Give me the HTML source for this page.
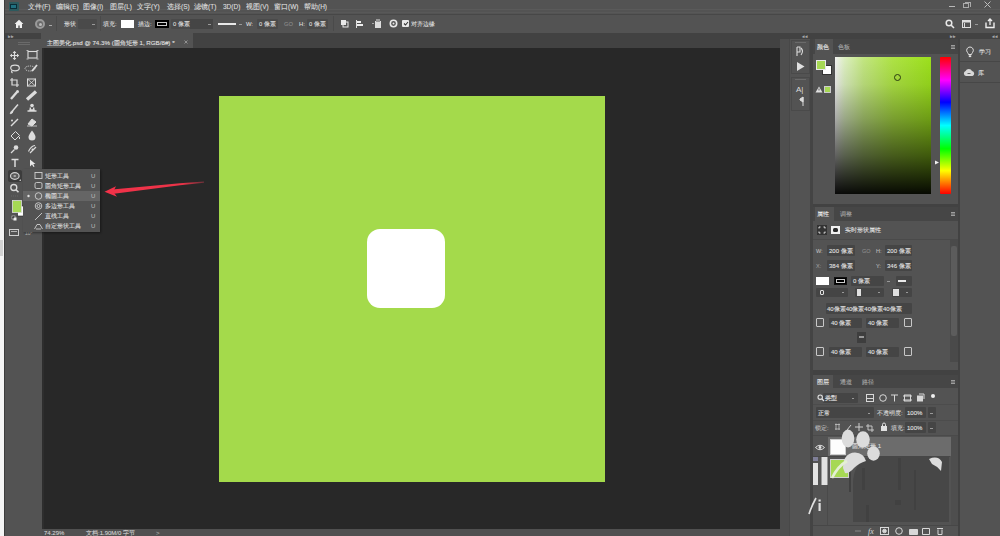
<!DOCTYPE html>
<html><head><meta charset="utf-8">
<style>
*{margin:0;padding:0;box-sizing:border-box}
html,body{width:1000px;height:536px;overflow:hidden;background:#535353;font-family:"Liberation Sans",sans-serif;color:#d6d6d6;font-size:7px;line-height:1}
.a{position:absolute}
.t{position:absolute;white-space:nowrap;font-size:7px;line-height:8px;color:#dedede;-webkit-text-stroke:0.1px currentColor}
.f{position:absolute;background:#454545;border-radius:1px}
.ic{position:absolute;overflow:visible}
</style></head><body>
<!-- left white strip -->
<div class="a" style="left:0;top:0;width:4px;height:536px;background:#f4f4f4"></div>
<div class="a" style="left:0;top:240px;width:2.5px;height:16px;background:#d2d2d2"></div>
<div class="a" style="left:4px;top:0;width:1px;height:536px;background:#3c3c3c"></div>

<!-- menu bar -->
<div class="a" style="left:5px;top:0;width:995px;height:12px;background:#535353"></div>
<div class="a" style="left:5px;top:12px;width:995px;height:1px;background:#585858"></div>
<!-- options bar -->
<div class="a" style="left:5px;top:14px;width:995px;height:19px;background:#535353"></div>
<!-- dark header strip / tab bar -->
<div class="a" style="left:5px;top:33px;width:995px;height:6px;background:#424242"></div>


<!-- MENU BAR CONTENT -->
<div class="a" style="left:5px;top:9px;width:995px;height:1px;background:#5a5a5a"></div>
<div class="a" style="left:5px;top:14px;width:995px;height:1px;background:#474747"></div>
<div class="a" style="left:8.5px;top:2px;width:10px;height:9px;background:#2c5a5e;border-radius:1px"></div>
<div class="a" style="left:10px;top:3.5px;width:7px;height:5.5px;background:#0c2c36"></div>
<div class="a" style="left:11px;top:5px;width:5px;height:2.5px;background:#1f7080"></div>
<div class="t" style="left:28px;top:3px;font-size:6.5px">文件(F)</div>
<div class="t" style="left:56px;top:3px;font-size:6.5px">编辑(E)</div>
<div class="t" style="left:83px;top:3px;font-size:6.5px">图像(I)</div>
<div class="t" style="left:110px;top:3px;font-size:6.5px">图层(L)</div>
<div class="t" style="left:137px;top:3px;font-size:6.5px">文字(Y)</div>
<div class="t" style="left:167px;top:3px;font-size:6.5px">选择(S)</div>
<div class="t" style="left:194px;top:3px;font-size:6.5px">滤镜(T)</div>
<div class="t" style="left:223px;top:3px;font-size:6.5px">3D(D)</div>
<div class="t" style="left:246px;top:3px;font-size:6.5px">视图(V)</div>
<div class="t" style="left:274px;top:3px;font-size:6.5px">窗口(W)</div>
<div class="t" style="left:304px;top:3px;font-size:6.5px">帮助(H)</div>
<div class="a" style="left:949px;top:6px;width:6px;height:1px;background:#b8b8b8"></div>
<div class="a" style="left:963px;top:3px;width:6px;height:5px;border:1px solid #aaa"></div>
<div class="a" style="left:965px;top:1.5px;width:6px;height:5px;border-top:1px solid #aaa;border-right:1px solid #aaa"></div>
<svg class="ic" style="left:983px;top:1px" width="9" height="7" viewBox="0 0 9 7"><path d="M1.5 0.5L7.5 6.5M7.5 0.5L1.5 6.5" stroke="#bdbdbd" stroke-width="1"/></svg>


<!-- OPTIONS BAR CONTENT -->
<svg class="ic" style="left:14px;top:19px" width="10" height="10" viewBox="0 0 10 10"><path d="M5 0.8L0.6 5H2v4h2.3V6.5h1.4V9H8V5h1.4z" fill="#f0f0f0"/></svg>
<div class="a" style="left:35px;top:19px;width:10px;height:10px;border-radius:50%;border:2px solid #9a9a9a;background:#6a6a6a"></div>
<div class="a" style="left:38.5px;top:22.5px;width:3px;height:3px;border-radius:50%;background:#bbb"></div>
<div class="a" style="left:49px;top:25px;width:3px;height:1px;background:#aaa"></div>
<div class="a" style="left:56px;top:16px;width:1px;height:15px;background:#4a4a4a"></div>
<div class="t" style="left:64px;top:19.5px;font-size:6px">形状</div>
<div class="f" style="left:78px;top:19px;width:19px;height:10px;background:#4a4a4a"></div>
<div class="a" style="left:92px;top:24px;width:3px;height:1px;background:#999"></div>
<div class="a" style="left:100px;top:16px;width:1px;height:15px;background:#4a4a4a"></div>
<div class="t" style="left:103px;top:19.5px;font-size:6px">填充:</div>
<div class="a" style="left:121px;top:20px;width:13px;height:8px;background:#fff"></div>
<div class="t" style="left:138px;top:19.5px;font-size:6px">描边:</div>
<div class="a" style="left:155px;top:20px;width:14px;height:8px;background:#000;border:1px solid #000"></div>
<div class="a" style="left:157px;top:22px;width:10px;height:4px;border:1px solid #ccc;background:#000"></div>
<div class="f" style="left:171px;top:19px;width:42px;height:10px;background:#4a4a4a"></div>
<div class="a" style="left:190px;top:19px;width:23px;height:10px;background:#454545"></div>
<div class="t" style="left:173px;top:19.5px;font-size:5.8px">0 像素</div>
<div class="a" style="left:208px;top:24px;width:3px;height:1px;background:#999"></div>
<div class="a" style="left:218px;top:23px;width:18px;height:2px;background:#e8e8e8"></div>
<div class="a" style="left:239px;top:24px;width:3px;height:1px;background:#999"></div>
<div class="t" style="left:246px;top:19.5px;font-size:5.8px">W:</div>
<div class="f" style="left:257px;top:19px;width:21px;height:10px;background:#4a4a4a"></div>
<div class="t" style="left:259px;top:19.5px;font-size:5.8px">0 像素</div>
<div class="t" style="left:284px;top:19.5px;font-size:5.8px;color:#8a8a8a">GO</div>
<div class="t" style="left:299px;top:19.5px;font-size:5.8px">H:</div>
<div class="f" style="left:307px;top:19px;width:21px;height:10px;background:#4a4a4a"></div>
<div class="t" style="left:309px;top:19.5px;font-size:5.8px">0 像素</div>
<div class="a" style="left:333px;top:16px;width:1px;height:15px;background:#4a4a4a"></div>
<svg class="ic" style="left:340px;top:19px" width="9" height="10" viewBox="0 0 9 10"><rect x="1" y="1" width="5" height="5" fill="#e8e8e8"/><rect x="3" y="3" width="5" height="5" fill="none" stroke="#e8e8e8" stroke-width="1"/></svg>
<svg class="ic" style="left:355px;top:19px" width="9" height="10" viewBox="0 0 9 10"><rect x="1" y="1" width="1" height="8" fill="#ddd"/><rect x="2" y="2" width="4" height="2" fill="#eee"/><rect x="2" y="5" width="6" height="2" fill="#eee"/></svg>
<svg class="ic" style="left:371px;top:18px" width="12" height="12" viewBox="0 0 12 12"><rect x="4" y="3" width="6" height="7" fill="#ddd"/><rect x="5" y="1" width="4" height="3" fill="#999"/><rect x="1" y="5" width="2" height="1" fill="#aaa"/></svg>
<svg class="ic" style="left:389px;top:19px" width="9" height="9" viewBox="0 0 9 9"><circle cx="4.5" cy="4.5" r="3.2" fill="none" stroke="#e8e8e8" stroke-width="1.6"/><circle cx="4.5" cy="4.5" r="1" fill="#e8e8e8"/></svg>
<div class="a" style="left:402px;top:20px;width:7px;height:7px;background:#e8e8e8;border-radius:1px"></div>
<svg class="ic" style="left:403px;top:21px" width="6" height="5" viewBox="0 0 6 5"><path d="M1 2.5L2.5 4L5 1" stroke="#333" stroke-width="1.1" fill="none"/></svg>
<div class="t" style="left:411px;top:19.5px;font-size:6px">对齐边缘</div>
<svg class="ic" style="left:945px;top:19px" width="10" height="10" viewBox="0 0 10 10"><circle cx="4" cy="4" r="2.8" fill="none" stroke="#e8e8e8" stroke-width="1.5"/><path d="M6 6L9 9" stroke="#e8e8e8" stroke-width="1.6"/></svg>
<svg class="ic" style="left:962px;top:19px" width="10" height="10" viewBox="0 0 10 10"><rect x="0.5" y="1.5" width="8" height="7" fill="none" stroke="#ddd" stroke-width="1"/><rect x="0.5" y="1.5" width="8" height="2" fill="#ddd"/><rect x="2" y="4" width="1" height="4" fill="#ddd"/></svg>
<div class="a" style="left:975px;top:24px;width:3px;height:1px;background:#999"></div>
<svg class="ic" style="left:985px;top:18px" width="10" height="11" viewBox="0 0 10 11"><path d="M1 4.5V9.5H9V4.5" stroke="#eee" stroke-width="1.4" fill="none"/><path d="M5 7V1M3 3L5 1L7 3" stroke="#eee" stroke-width="1.3" fill="none"/></svg>

<!-- toolbar -->
<div class="a" style="left:5px;top:39px;width:37px;height:497px;background:#535353"></div>


<!-- TOOLBAR CONTENT -->
<div class="a" style="left:18px;top:42px;width:12px;height:1px;background:#6a6a6a"></div>
<div class="a" style="left:18px;top:44px;width:12px;height:1px;background:#6a6a6a"></div>
<svg class="ic" style="left:5px;top:39px" width="37" height="205" viewBox="5 39 37 205">
 <g fill="none" stroke="#dcdcdc" stroke-width="1.2">
  <!-- move -->
  <path d="M14.5 51.5V59.5M10.5 55.5H18.5"/>
  <path d="M13 53L14.5 51.3L16 53M13 58L14.5 59.7L16 58M12 54L10.3 55.5L12 57M17 54L18.7 55.5L17 57" stroke-width="1"/>
  <!-- artboard -->
  <rect x="28" y="51.5" width="9" height="6.5" stroke-width="1.1"/>
  <path d="M26.5 50.5H28.5M36.5 50.5H38.5M26.5 59H28.5M36.5 59H38.5" stroke-width="0.8"/>
  <!-- lasso -->
  <ellipse cx="15" cy="68" rx="4.3" ry="2.8"/>
  <path d="M12 70.5Q11 72 12.5 73"/>
  <!-- quick select -->
  <ellipse cx="30" cy="68.5" rx="5" ry="2.5" stroke-dasharray="1.2 1" stroke-width="0.9"/>
  <path d="M32 71L37 65" stroke-width="1.8"/>
  <!-- crop -->
  <path d="M12 78V85H19M10 80H17V87"/>
  <!-- frame -->
  <rect x="27.5" y="79" width="8" height="7" stroke-width="1"/>
  <path d="M27.5 79L35.5 86M35.5 79L27.5 86" stroke-width="0.8"/>
  <!-- eyedropper -->
  <path d="M11 99L17 92" stroke-width="2.3"/><circle cx="17.5" cy="91.5" r="1.5" fill="#dcdcdc" stroke="none"/>
  <!-- healing -->
  <path d="M27 99.5L36 91.5" stroke-width="3.2"/>
  <!-- brush -->
  <path d="M12 111.5L18 104.5" stroke-width="1.5"/><path d="M10.2 113.8Q10.5 110.5 13 111.2Q13 113.5 10.2 113.8Z" fill="#dcdcdc" stroke-width="0.8"/>
  <!-- stamp -->
  <circle cx="32" cy="105.5" r="1.8" fill="#dcdcdc" stroke="none"/>
  <path d="M30.5 107.5L30 110H34L33.5 107.5M27.5 111H36.5" stroke-width="1.4"/>
  <!-- history brush -->
  <path d="M11 126L18 119" stroke-width="1.5"/>
  <circle cx="12" cy="120.5" r="1" fill="#dcdcdc" stroke="none"/>
  <!-- eraser -->
  <path d="M28 124L32 119L36 122L32 126Z" stroke-width="1" fill="#dcdcdc"/>
  <path d="M27 126H37" stroke-width="0.8"/>
  <!-- bucket -->
  <path d="M11 136L15.5 131.5L19.5 135.5L15 140Z" stroke-width="1"/>
  <path d="M19.5 137V139" stroke-width="1"/>
  <!-- blur drop -->
  <path d="M32 130.5Q28.5 135 28.5 137A3.5 3.5 0 0 0 35.5 137Q35.5 135 32 130.5Z" fill="#dcdcdc" stroke="none"/>
  <!-- dodge -->
  <circle cx="16" cy="147.5" r="2.3" fill="#dcdcdc" stroke="none"/>
  <path d="M14.5 149.5L11 153" stroke-width="1.3"/>
  <!-- pen -->
  <path d="M30 153L36 147M28.5 151.5Q31 146 35 145.5" stroke-width="1.2"/>
  <circle cx="32.5" cy="149.5" r="1" fill="#dcdcdc" stroke="none"/>
  <!-- type -->
  <path d="M11.5 159.5H18.5M15 159.5V167" stroke-width="1.5"/>
  <!-- path select -->
  <path d="M30 159.5V166.5L32 164.5L33.5 167L34.5 166.5L33.3 164H35.5Z" fill="#e8e8e8" stroke="none"/>
 </g>
 <!-- active ellipse tool bg -->
 <rect x="8" y="170" width="14" height="12" rx="2" fill="#3c3c3c"/>
 <ellipse cx="14.8" cy="176" rx="4.3" ry="3.4" fill="#5a5a5a" stroke="#d0d0d0" stroke-width="1.2"/><ellipse cx="14.8" cy="176" rx="1.4" ry="1.1" fill="#aaa"/>
 <path d="M19 181L21 179L21 181Z" fill="#bbb"/>
 <!-- zoom -->
 <circle cx="13.8" cy="187.5" r="3" fill="none" stroke="#dcdcdc" stroke-width="1.3"/>
 <path d="M16 189.7L18.5 192.2" stroke="#dcdcdc" stroke-width="1.6"/>
 <!-- dots -->
 <path d="M11 196H19" stroke="#6a6a6a" stroke-width="0.8" stroke-dasharray="1 1"/>
 <!-- fg/bg swatches -->
 <rect x="17.5" y="206" width="8" height="10" fill="#ffffff" stroke="#222" stroke-width="0.6"/>
 <rect x="12.5" y="200.5" width="9" height="12" fill="#a6d854" stroke="#dcdcdc" stroke-width="0.8"/>
 <rect x="12" y="216" width="3" height="3" fill="#111" stroke="#ddd" stroke-width="0.6"/>
 <rect x="13.5" y="217.5" width="3" height="3" fill="#eee"/>
 <!-- screen mode -->
 <rect x="9.5" y="229.5" width="9" height="6" fill="none" stroke="#cfcfcf" stroke-width="1"/>
 <path d="M11 231.5H17" stroke="#cfcfcf" stroke-width="0.8"/>
</svg>
<div class="t" style="left:25px;top:230px;font-size:5px;line-height:6px;color:#aaa">10°</div>

<!-- doc tab bar -->
<div class="a" style="left:42px;top:33px;width:739px;height:15px;background:#424242"></div>
<div class="a" style="left:41px;top:33px;width:152px;height:15px;background:#535353"></div>


<!-- DOC TAB CONTENT -->
<div class="t" style="left:8px;top:33px;font-size:5px;line-height:6px;color:#aaa">&#x25B8;&#x25B8;</div>
<div class="t" style="left:47px;top:39px;font-size:6.2px;color:#e0e0e0">主图美化.psd @ 74.3% (圆角矩形 1, RGB/8#) *</div>
<svg class="ic" style="left:183px;top:39px" width="6" height="6" viewBox="0 0 6 6"><path d="M1.5 1.5L4.5 4.5M4.5 1.5L1.5 4.5" stroke="#999" stroke-width="0.9"/></svg>

<!-- pasteboard -->
<div class="a" style="left:42px;top:48px;width:738px;height:481px;background:#282828"></div>
<div class="a" style="left:42px;top:48px;width:2px;height:481px;background:#2e2e2e"></div>
<!-- green doc -->
<div class="a" style="left:219px;top:96px;width:386px;height:386px;background:#a4da4b"></div>
<div class="a" style="left:367px;top:229px;width:78px;height:79px;background:#ffffff;border-radius:13px"></div>


<!-- FLYOUT -->
<div class="a" style="left:23px;top:169px;width:77px;height:63px;background:#535353;box-shadow:1px 1px 2px rgba(0,0,0,0.4)"></div>
<div class="a" style="left:23px;top:191px;width:77px;height:10px;background:#656565"></div>
<svg class="ic" style="left:23px;top:169px" width="77" height="63" viewBox="23 169 77 63">
 <g fill="none" stroke="#d0d0d0" stroke-width="0.9">
  <rect x="35" y="172.5" width="7" height="6"/>
  <rect x="35" y="182.5" width="7" height="6" rx="1.5"/>
  <circle cx="38.5" cy="196" r="3.3"/>
  <circle cx="38.5" cy="206" r="3.3"/>
  <circle cx="38.5" cy="206" r="1.5"/>
  <path d="M35 220L42 213"/>
  <path d="M34.5 229L37 224.5H40L42.5 229M36 229H41"/>
 </g>
 <circle cx="28.5" cy="196" r="1.2" fill="#e0e0e0"/>
</svg>
<div class="t" style="left:45px;top:172px;font-size:6px">矩形工具</div>
<div class="t" style="left:45px;top:182px;font-size:6px">圆角矩形工具</div>
<div class="t" style="left:45px;top:192px;font-size:6px">椭圆工具</div>
<div class="t" style="left:45px;top:202px;font-size:6px">多边形工具</div>
<div class="t" style="left:45px;top:212px;font-size:6px">直线工具</div>
<div class="t" style="left:45px;top:222px;font-size:6px">自定形状工具</div>
<div class="t" style="left:91px;top:172px;font-size:6px;color:#bdbdbd;-webkit-text-stroke:0">U</div>
<div class="t" style="left:91px;top:182px;font-size:6px;color:#bdbdbd;-webkit-text-stroke:0">U</div>
<div class="t" style="left:91px;top:192px;font-size:6px;color:#bdbdbd;-webkit-text-stroke:0">U</div>
<div class="t" style="left:91px;top:202px;font-size:6px;color:#bdbdbd;-webkit-text-stroke:0">U</div>
<div class="t" style="left:91px;top:212px;font-size:6px;color:#bdbdbd;-webkit-text-stroke:0">U</div>
<div class="t" style="left:91px;top:222px;font-size:6px;color:#bdbdbd;-webkit-text-stroke:0">U</div>
<!-- red arrow -->
<svg class="ic" style="left:100px;top:175px" width="110" height="25" viewBox="100 175 110 25">
 <defs><linearGradient id="ag" gradientUnits="userSpaceOnUse" x1="105" y1="0" x2="204" y2="0"><stop offset="0" stop-color="#f23249"/><stop offset="0.78" stop-color="#ec3348"/><stop offset="1" stop-color="#6a3038"/></linearGradient></defs>
 <path d="M112 189.4L180 183.2L204 181.6L204 182.8L180 185.2L112 193.9Z" fill="url(#ag)"/>
 <path d="M104.5 191.8L116 186.3L113.2 191.7L117 196.8Z" fill="#f23249"/>
</svg>

<!-- status bar -->
<div class="a" style="left:42px;top:529px;width:739px;height:7px;background:#505050"></div>


<div class="t" style="left:44px;top:530px;font-size:6px;line-height:7px;color:#cfcfcf">74.29%</div>
<div class="t" style="left:86px;top:530px;font-size:6px;line-height:7px;color:#cfcfcf">文档:1.90M/0 字节</div>
<div class="t" style="left:156px;top:530px;font-size:6px;line-height:7px;color:#aaa">&gt;</div>

<!-- right region -->
<div class="a" style="left:780px;top:39px;width:10px;height:497px;background:#4e4e4e"></div>
<div class="a" style="left:789px;top:39px;width:1px;height:497px;background:#484848"></div>
<div class="a" style="left:791px;top:39px;width:19px;height:497px;background:#535353"></div>
<div class="a" style="left:810px;top:39px;width:3px;height:497px;background:#444444"></div>
<div class="a" style="left:813px;top:39px;width:145px;height:497px;background:#535353"></div>
<div class="a" style="left:958px;top:39px;width:2px;height:497px;background:#424242"></div>
<div class="a" style="left:960px;top:39px;width:40px;height:497px;background:#535353"></div>

<!-- color panel -->
<div class="a" style="left:813px;top:39px;width:145px;height:15px;background:#464646"></div>
<div class="a" style="left:815px;top:39px;width:18px;height:15px;background:#535353"></div>
<div class="a" style="left:835px;top:57px;width:96px;height:137px;background:linear-gradient(to bottom,rgba(0,0,0,0) 0%,rgba(0,0,0,0.08) 20%,rgba(0,0,0,0.3) 45%,rgba(0,0,0,0.6) 72%,rgba(0,0,0,0.96) 100%),linear-gradient(to right,#f2f2f2 0%,#dcefc0 10%,#c2e680 30%,#aee345 60%,#9ce01c 100%)"></div>
<div class="a" style="left:940px;top:57px;width:10.5px;height:137px;border-radius:1px;background:linear-gradient(to bottom,#f00,#f0f 17%,#00f 33%,#0ff 50%,#0f0 67%,#ff0 83%,#f00)"></div>

<!-- separator color/properties -->
<div class="a" style="left:813px;top:204px;width:145px;height:3px;background:#424242"></div>
<div class="a" style="left:813px;top:207px;width:145px;height:14px;background:#464646"></div>
<div class="a" style="left:815px;top:207px;width:19px;height:14px;background:#535353"></div>

<!-- separator properties/layers -->
<div class="a" style="left:813px;top:370px;width:145px;height:5px;background:#424242"></div>
<div class="a" style="left:813px;top:375px;width:145px;height:13px;background:#464646"></div>
<div class="a" style="left:813px;top:375px;width:20px;height:13px;background:#535353"></div>


<!-- RIGHT CONTENT -->
<!-- header strip markers -->
<div class="t" style="left:802px;top:33px;font-size:5px;line-height:6px;color:#aaa">&#x25C2;&#x25C2;</div>
<div class="t" style="left:950px;top:33px;font-size:5px;line-height:6px;color:#aaa">&#x25B8;&#x25B8;</div>
<div class="t" style="left:992px;top:33px;font-size:5px;line-height:6px;color:#aaa">&#x25C2;&#x25C2;</div>
<!-- icon column -->
<div class="a" style="left:791px;top:40px;width:19px;height:34px;border:1px solid #4a4a4a;background:#535353"></div>
<div class="a" style="left:791px;top:77px;width:19px;height:34px;border:1px solid #4a4a4a;background:#535353"></div>
<div class="a" style="left:795px;top:42px;width:11px;height:1px;background:#6a6a6a"></div>
<div class="a" style="left:795px;top:79px;width:11px;height:1px;background:#6a6a6a"></div>
<svg class="ic" style="left:791px;top:40px" width="20" height="72" viewBox="791 40 20 72">
 <g stroke="#dcdcdc" fill="none" stroke-width="1.1">
  <path d="M797 47V56M797 47H800V52H797"/>
  <path d="M801 48Q804 51 801 55" />
 </g>
 <path d="M797 62L804.5 66.5L797 71Z" fill="#e0e0e0"/>
 <text x="796" y="92" font-family="Liberation Sans" font-size="8" fill="#dcdcdc">A|</text>
 <path d="M803 97V106M800 99L803 97V102L800 100Z" stroke="#dcdcdc" stroke-width="1" fill="#dcdcdc"/>
</svg>
<!-- color panel tabs -->
<div class="t" style="left:817px;top:43px;font-size:6px;color:#e8e8e8">颜色</div>
<div class="t" style="left:838px;top:43px;font-size:6px;color:#a8a8a8">色板</div>
<svg class="ic" style="left:949px;top:44px" width="8" height="6" viewBox="0 0 8 6"><path d="M2 1.5H6M2 3H6M2 4.5H6" stroke="#a8a8a8" stroke-width="0.9"/></svg>
<!-- fg/bg -->
<div class="a" style="left:822px;top:65px;width:10px;height:10px;background:#fff;border:1px solid #333"></div>
<div class="a" style="left:816px;top:60px;width:10px;height:10px;background:#a6d854;border:1px solid #e8e8e8"></div>
<svg class="ic" style="left:815px;top:86px" width="8" height="7" viewBox="0 0 8 7"><path d="M4 0.5L7.5 6.5H0.5Z" fill="#e0e0e0"/><path d="M4 2.5V4.5" stroke="#333" stroke-width="0.8"/></svg>
<div class="a" style="left:824px;top:86px;width:7px;height:7px;background:#a6d854;border:1px solid #ccc"></div>
<!-- picker circle -->
<div class="a" style="left:894px;top:73.5px;width:7px;height:7px;border-radius:50%;border:1px solid #2a3a10"></div>
<svg class="ic" style="left:935px;top:160px" width="5" height="5" viewBox="0 0 5 5"><path d="M0 0.5L4 2.5L0 4.5Z" fill="#f0f0f0"/></svg>
<!-- learn / libraries -->
<div class="a" style="left:960px;top:61px;width:40px;height:1px;background:#474747"></div>
<div class="a" style="left:960px;top:82px;width:40px;height:1px;background:#474747"></div>
<svg class="ic" style="left:965px;top:46px" width="10" height="12" viewBox="0 0 10 12"><path d="M5 1A3.3 3.3 0 0 0 2.5 6.5Q3.3 7.5 3.5 8.5H6.5Q6.7 7.5 7.5 6.5A3.3 3.3 0 0 0 5 1Z" fill="none" stroke="#e0e0e0" stroke-width="1"/><rect x="3.8" y="9.3" width="2.4" height="1.8" fill="#e0e0e0"/></svg>
<div class="t" style="left:979px;top:48px;font-size:6px;color:#e0e0e0">学习</div>
<svg class="ic" style="left:963px;top:68px" width="12" height="9" viewBox="0 0 12 9"><path d="M3 8A2.6 2.6 0 0 1 2.6 3A3.5 3.5 0 0 1 9 3A2.6 2.6 0 0 1 9.5 8Z" fill="#d8d8d8"/><path d="M4.5 5.5H7.5" stroke="#555" stroke-width="0.9"/></svg>
<div class="t" style="left:978px;top:69px;font-size:6px;color:#e0e0e0">库</div>


<!-- PROPERTIES PANEL -->
<div class="t" style="left:817px;top:210px;font-size:6px;color:#e8e8e8">属性</div>
<div class="t" style="left:840px;top:210px;font-size:6px;color:#a8a8a8">调整</div>
<svg class="ic" style="left:949px;top:211px" width="8" height="6" viewBox="0 0 8 6"><path d="M2 1.5H6M2 3H6M2 4.5H6" stroke="#a8a8a8" stroke-width="0.9"/></svg>
<div class="a" style="left:813px;top:239px;width:145px;height:1px;background:#4a4a4a"></div>
<svg class="ic" style="left:817px;top:225px" width="10" height="10" viewBox="0 0 10 10"><rect x="0" y="0" width="10" height="10" fill="#333"/><path d="M2 3.5V2H3.5M6.5 2H8V3.5M8 6.5V8H6.5M3.5 8H2V6.5" stroke="#e0e0e0" stroke-width="1" fill="none"/></svg>
<div class="a" style="left:831px;top:226px;width:9px;height:8px;background:#f0f0f0"></div>
<div class="a" style="left:833px;top:228px;width:5px;height:4px;background:#2a2a2a;border-radius:1.5px"></div>
<div class="t" style="left:845px;top:226px;font-size:6px;color:#e0e0e0">实时形状属性</div>
<!-- W H -->
<div class="t" style="left:816px;top:247px;font-size:5.5px;color:#bbb">W:</div>
<div class="f" style="left:827px;top:245px;width:28px;height:11px"></div>
<div class="t" style="left:829px;top:247px;font-size:6px;color:#e0e0e0">200 像素</div>
<div class="t" style="left:862px;top:247px;font-size:5.5px;color:#8a8a8a">GO</div>
<div class="t" style="left:876px;top:247px;font-size:5.5px;color:#bbb">H:</div>
<div class="f" style="left:885px;top:245px;width:27px;height:11px"></div>
<div class="t" style="left:887px;top:247px;font-size:6px;color:#e0e0e0">200 像素</div>
<!-- X Y -->
<div class="t" style="left:816px;top:262px;font-size:5.5px;color:#999">X:</div>
<div class="f" style="left:827px;top:260px;width:28px;height:11px"></div>
<div class="t" style="left:829px;top:262px;font-size:6px;color:#e0e0e0">384 像素</div>
<div class="t" style="left:876px;top:262px;font-size:5.5px;color:#bbb">Y:</div>
<div class="f" style="left:885px;top:260px;width:27px;height:11px"></div>
<div class="t" style="left:887px;top:262px;font-size:6px;color:#e0e0e0">346 像素</div>
<!-- fill stroke row -->
<div class="a" style="left:816px;top:277px;width:13px;height:8px;background:#fff"></div>
<div class="a" style="left:834px;top:277px;width:13px;height:8px;background:#000;border:1px solid #111"></div>
<div class="a" style="left:836px;top:279px;width:9px;height:4px;border:1px solid #ccc"></div>
<div class="f" style="left:851px;top:276px;width:33px;height:10px"></div>
<div class="t" style="left:853px;top:277px;font-size:6px;color:#e0e0e0">0 像素</div>
<div class="a" style="left:887px;top:281px;width:3px;height:1px;background:#999"></div>
<div class="f" style="left:896px;top:276px;width:16px;height:10px"></div>
<div class="a" style="left:898px;top:280px;width:8px;height:2px;background:#e8e8e8"></div>
<!-- row align -->
<div class="f" style="left:816px;top:288px;width:32px;height:9px"></div>
<div class="a" style="left:820px;top:290px;width:4px;height:5px;border:1px solid #e0e0e0;border-radius:1px"></div>
<div class="a" style="left:842px;top:292px;width:2px;height:1px;background:#999"></div>
<div class="f" style="left:855px;top:288px;width:29px;height:9px"></div>
<div class="a" style="left:857px;top:289px;width:4px;height:7px;background:#e0e0e0"></div>
<div class="a" style="left:878px;top:292px;width:2px;height:1px;background:#999"></div>
<div class="f" style="left:892px;top:288px;width:20px;height:9px"></div>
<div class="a" style="left:893px;top:289px;width:6px;height:7px;background:#e0e0e0"></div>
<div class="a" style="left:906px;top:292px;width:2px;height:1px;background:#999"></div>
<!-- corners -->
<div class="f" style="left:826px;top:303px;width:86px;height:11px"></div>
<div class="t" style="left:827px;top:305px;font-size:6px;color:#e0e0e0;letter-spacing:0px">40像素40像素40像素40像素</div>
<div class="a" style="left:816px;top:318px;width:8px;height:9px;border:1px solid #c8c8c8;border-radius:1px"></div>
<div class="f" style="left:829px;top:318px;width:33px;height:10px"></div>
<div class="t" style="left:831px;top:319px;font-size:6px;color:#e0e0e0">40 像素</div>
<div class="f" style="left:866px;top:318px;width:33px;height:10px"></div>
<div class="t" style="left:868px;top:319px;font-size:6px;color:#e0e0e0">40 像素</div>
<div class="a" style="left:904px;top:318px;width:8px;height:9px;border:1px solid #c8c8c8;border-radius:1px"></div>
<div class="a" style="left:857px;top:332px;width:9px;height:11px;background:#3e3e3e"></div>
<div class="a" style="left:859px;top:336px;width:5px;height:2px;background:#999"></div>
<div class="a" style="left:816px;top:347px;width:8px;height:9px;border:1px solid #c8c8c8;border-radius:1px"></div>
<div class="f" style="left:829px;top:347px;width:33px;height:10px"></div>
<div class="t" style="left:831px;top:348px;font-size:6px;color:#e0e0e0">40 像素</div>
<div class="f" style="left:866px;top:347px;width:33px;height:10px"></div>
<div class="t" style="left:868px;top:348px;font-size:6px;color:#e0e0e0">40 像素</div>
<div class="a" style="left:904px;top:347px;width:8px;height:9px;border:1px solid #c8c8c8;border-radius:1px"></div>
<!-- scrollbar -->
<div class="a" style="left:950px;top:240px;width:8px;height:122px;background:#4a4a4a"></div>
<div class="a" style="left:951px;top:246px;width:6px;height:90px;background:#5c5c5c;border-radius:2px"></div>


<!-- LAYERS PANEL -->
<div class="t" style="left:817px;top:378px;font-size:6px;color:#e8e8e8">图层</div>
<div class="t" style="left:840px;top:378px;font-size:6px;color:#a8a8a8">通道</div>
<div class="t" style="left:862px;top:378px;font-size:6px;color:#a8a8a8">路径</div>
<svg class="ic" style="left:949px;top:379px" width="8" height="6" viewBox="0 0 8 6"><path d="M2 1.5H6M2 3H6M2 4.5H6" stroke="#a8a8a8" stroke-width="0.9"/></svg>
<!-- filter row -->
<div class="f" style="left:823px;top:393px;width:35px;height:10px"></div>
<div class="a" style="left:813px;top:404px;width:145px;height:1px;background:#4c4c4c"></div>
<div class="a" style="left:813px;top:420px;width:145px;height:1px;background:#4c4c4c"></div>
<svg class="ic" style="left:817px;top:394px" width="8" height="8" viewBox="0 0 8 8"><circle cx="3.2" cy="3.2" r="2.2" fill="none" stroke="#e0e0e0" stroke-width="1.1"/><path d="M4.8 4.8L7 7" stroke="#e0e0e0" stroke-width="1.3"/></svg>
<div class="t" style="left:825px;top:394px;font-size:6px;color:#e0e0e0">类型</div>
<div class="a" style="left:852px;top:398px;width:2px;height:1px;background:#999"></div>
<svg class="ic" style="left:864px;top:393px" width="80" height="10" viewBox="864 393 80 10">
 <g fill="none" stroke="#d8d8d8" stroke-width="1">
  <rect x="866.5" y="394.5" width="7" height="7"/>
  <path d="M866.5 398.5H873.5"/>
  <circle cx="883" cy="398" r="3.3"/>
  <path d="M891 395H898M894.5 395V401.5"/>
  <rect x="904.5" y="395" width="6" height="6"/>
  <path d="M903 396H912M903 400H912"/>
  <rect x="917.5" y="396" width="5" height="5" fill="#d8d8d8"/>
  <path d="M919 394H924V399"/>
 </g>
 <circle cx="933" cy="396" r="2" fill="#f0f0f0"/>
</svg>
<!-- blend row -->
<div class="f" style="left:816px;top:407px;width:58px;height:11px"></div>
<div class="t" style="left:818px;top:409px;font-size:6px;color:#e0e0e0">正常</div>
<div class="a" style="left:868px;top:413px;width:2px;height:1px;background:#999"></div>
<div class="t" style="left:877px;top:409px;font-size:6px;color:#d0d0d0">不透明度:</div>
<div class="f" style="left:905px;top:407px;width:21px;height:11px"></div>
<div class="t" style="left:907px;top:409px;font-size:6px;color:#e0e0e0">100%</div>
<div class="f" style="left:928px;top:407px;width:8px;height:11px"></div>
<div class="a" style="left:930px;top:413px;width:3px;height:1px;background:#999"></div>
<!-- lock row -->
<div class="t" style="left:815px;top:424px;font-size:6px;color:#bbb">锁定:</div>
<svg class="ic" style="left:833px;top:422px" width="58" height="10" viewBox="833 422 58 10">
 <g fill="none" stroke="#cfcfcf" stroke-width="1">
  <path d="M835 424.5H840M835 429H840M836 423.5V430M839 423.5V430" stroke-width="0.7"/>
  <path d="M847 430L851 425" />
  <path d="M859 423V431M855 427H863"/>
  <path d="M868 424V430H874M866 426H872V432" stroke-width="0.9"/>
 </g>
 <rect x="881" y="426" width="6" height="5" fill="#e0e0e0"/>
 <path d="M882.5 426V424.5A1.5 1.5 0 0 1 885.5 424.5V426" stroke="#e0e0e0" fill="none" stroke-width="1"/>
</svg>
<div class="t" style="left:891px;top:424px;font-size:6px;color:#d0d0d0">填充:</div>
<div class="f" style="left:905px;top:422px;width:21px;height:11px"></div>
<div class="t" style="left:907px;top:424px;font-size:6px;color:#e0e0e0">100%</div>
<div class="f" style="left:928px;top:422px;width:8px;height:11px"></div>
<div class="a" style="left:930px;top:428px;width:3px;height:1px;background:#999"></div>
<div class="a" style="left:813px;top:435px;width:145px;height:1px;background:#4a4a4a"></div>
<!-- layer rows -->
<div class="a" style="left:813px;top:436px;width:137px;height:20px;background:#535353"></div>
<div class="a" style="left:828px;top:437px;width:123px;height:19px;background:#6c6c6c"></div>
<div class="a" style="left:813px;top:456px;width:137px;height:1px;background:#474747"></div>
<svg class="ic" style="left:815px;top:444px" width="10" height="7" viewBox="0 0 10 7"><path d="M0.5 3.5Q5 -1 9.5 3.5Q5 8 0.5 3.5Z" fill="none" stroke="#e0e0e0" stroke-width="1"/><circle cx="5" cy="3.5" r="1.4" fill="#e0e0e0"/></svg>
<div class="a" style="left:830px;top:439px;width:16px;height:16px;background:#fdfdfd;border:1px solid #cfcfcf"></div>
<div class="a" style="left:830px;top:459px;width:19px;height:19px;background:#a6d854;border:1px solid #d0d0d0"></div>
<div class="t" style="left:852px;top:442px;font-size:6px;color:#dcdcdc">圆角矩形 1</div>

<!-- WATERMARK -->
<div class="a" style="left:827px;top:456px;width:1px;height:69px;background:#4a4a4a"></div>
<svg class="ic" style="left:800px;top:425px" width="158" height="105" viewBox="800 425 158 105">
 <defs><filter id="bl" x="-10%" y="-10%" width="120%" height="120%"><feGaussianBlur stdDeviation="0.45"/></filter></defs>
 <path d="M853 522V484Q853 462 871 457H949V522Z" fill="#474747"/>
 <g fill="#414141">
  <rect x="862" y="468" width="3" height="22"/>
  <rect x="898" y="458" width="3" height="32"/>
  <rect x="866" y="505" width="3" height="17"/>
  <rect x="895" y="500" width="6" height="5"/>
  <rect x="849" y="462" width="2" height="30"/>
  <rect x="914" y="470" width="2" height="40"/>
 </g>
 <g fill="#dcdcdc" filter="url(#bl)">
  <ellipse cx="848" cy="438.5" rx="6.3" ry="9"/>
  <ellipse cx="863" cy="439.5" rx="6.8" ry="8.2"/>
  <ellipse cx="873.5" cy="453.5" rx="6.3" ry="7.2"/>
  <path d="M843 468Q843 453 855 452.5Q864 453 866 461Q859 463 854 468Q849 474 845 473Z"/>
  <path d="M929 459Q938 455 942 462L941 471Q937 466 932 464Z"/>
 </g>
 <path d="M832 478Q838 466 847 461" stroke="#e4efd4" stroke-width="2.6" fill="none" filter="url(#bl)"/>
 <g fill="#e2e2e2" filter="url(#bl)">
  <rect x="813" y="463" width="5" height="22"/>
  <rect x="821.5" y="457" width="6" height="28"/>
 </g>
 <rect x="813" y="457" width="5" height="4" fill="#7f7f98"/>
 <path d="M809 514Q812 505 816 498" stroke="#e0e0e0" stroke-width="1.7" fill="none" filter="url(#bl)"/>
 <rect x="818.5" y="503" width="2.2" height="8" fill="#e0e0e0"/>
 <rect x="818.5" y="499.5" width="2.2" height="2" fill="#e0e0e0"/>
</svg>

<!-- bottom bar -->
<div class="a" style="left:813px;top:525px;width:145px;height:1px;background:#474747"></div>
<svg class="ic" style="left:850px;top:526px" width="100" height="10" viewBox="850 526 100 10">
 <g fill="none" stroke="#d8d8d8" stroke-width="1">
  <path d="M855 531H861" stroke="#888"/>
  <rect x="880.5" y="527.5" width="8" height="7"/>
  <circle cx="884.5" cy="531" r="1.8" fill="#d8d8d8"/>
  <circle cx="899" cy="531" r="3.3"/>
  <path d="M909.5 529.5H917.5V534.5H909.5Z" fill="#d8d8d8"/>
  <path d="M922.5 528.5H929.5V534.5H922.5Z"/>
  <path d="M937 528.5H943M938 529.5V534.5H942V529.5"/>
 </g>
 <text x="868" y="534" font-family="Liberation Serif" font-style="italic" font-size="8" fill="#d8d8d8">fx</text>
</svg>
<!-- right panel border -->
<div class="a" style="left:951px;top:436px;width:7px;height:89px;background:#4e4e4e"></div>

</body></html>
